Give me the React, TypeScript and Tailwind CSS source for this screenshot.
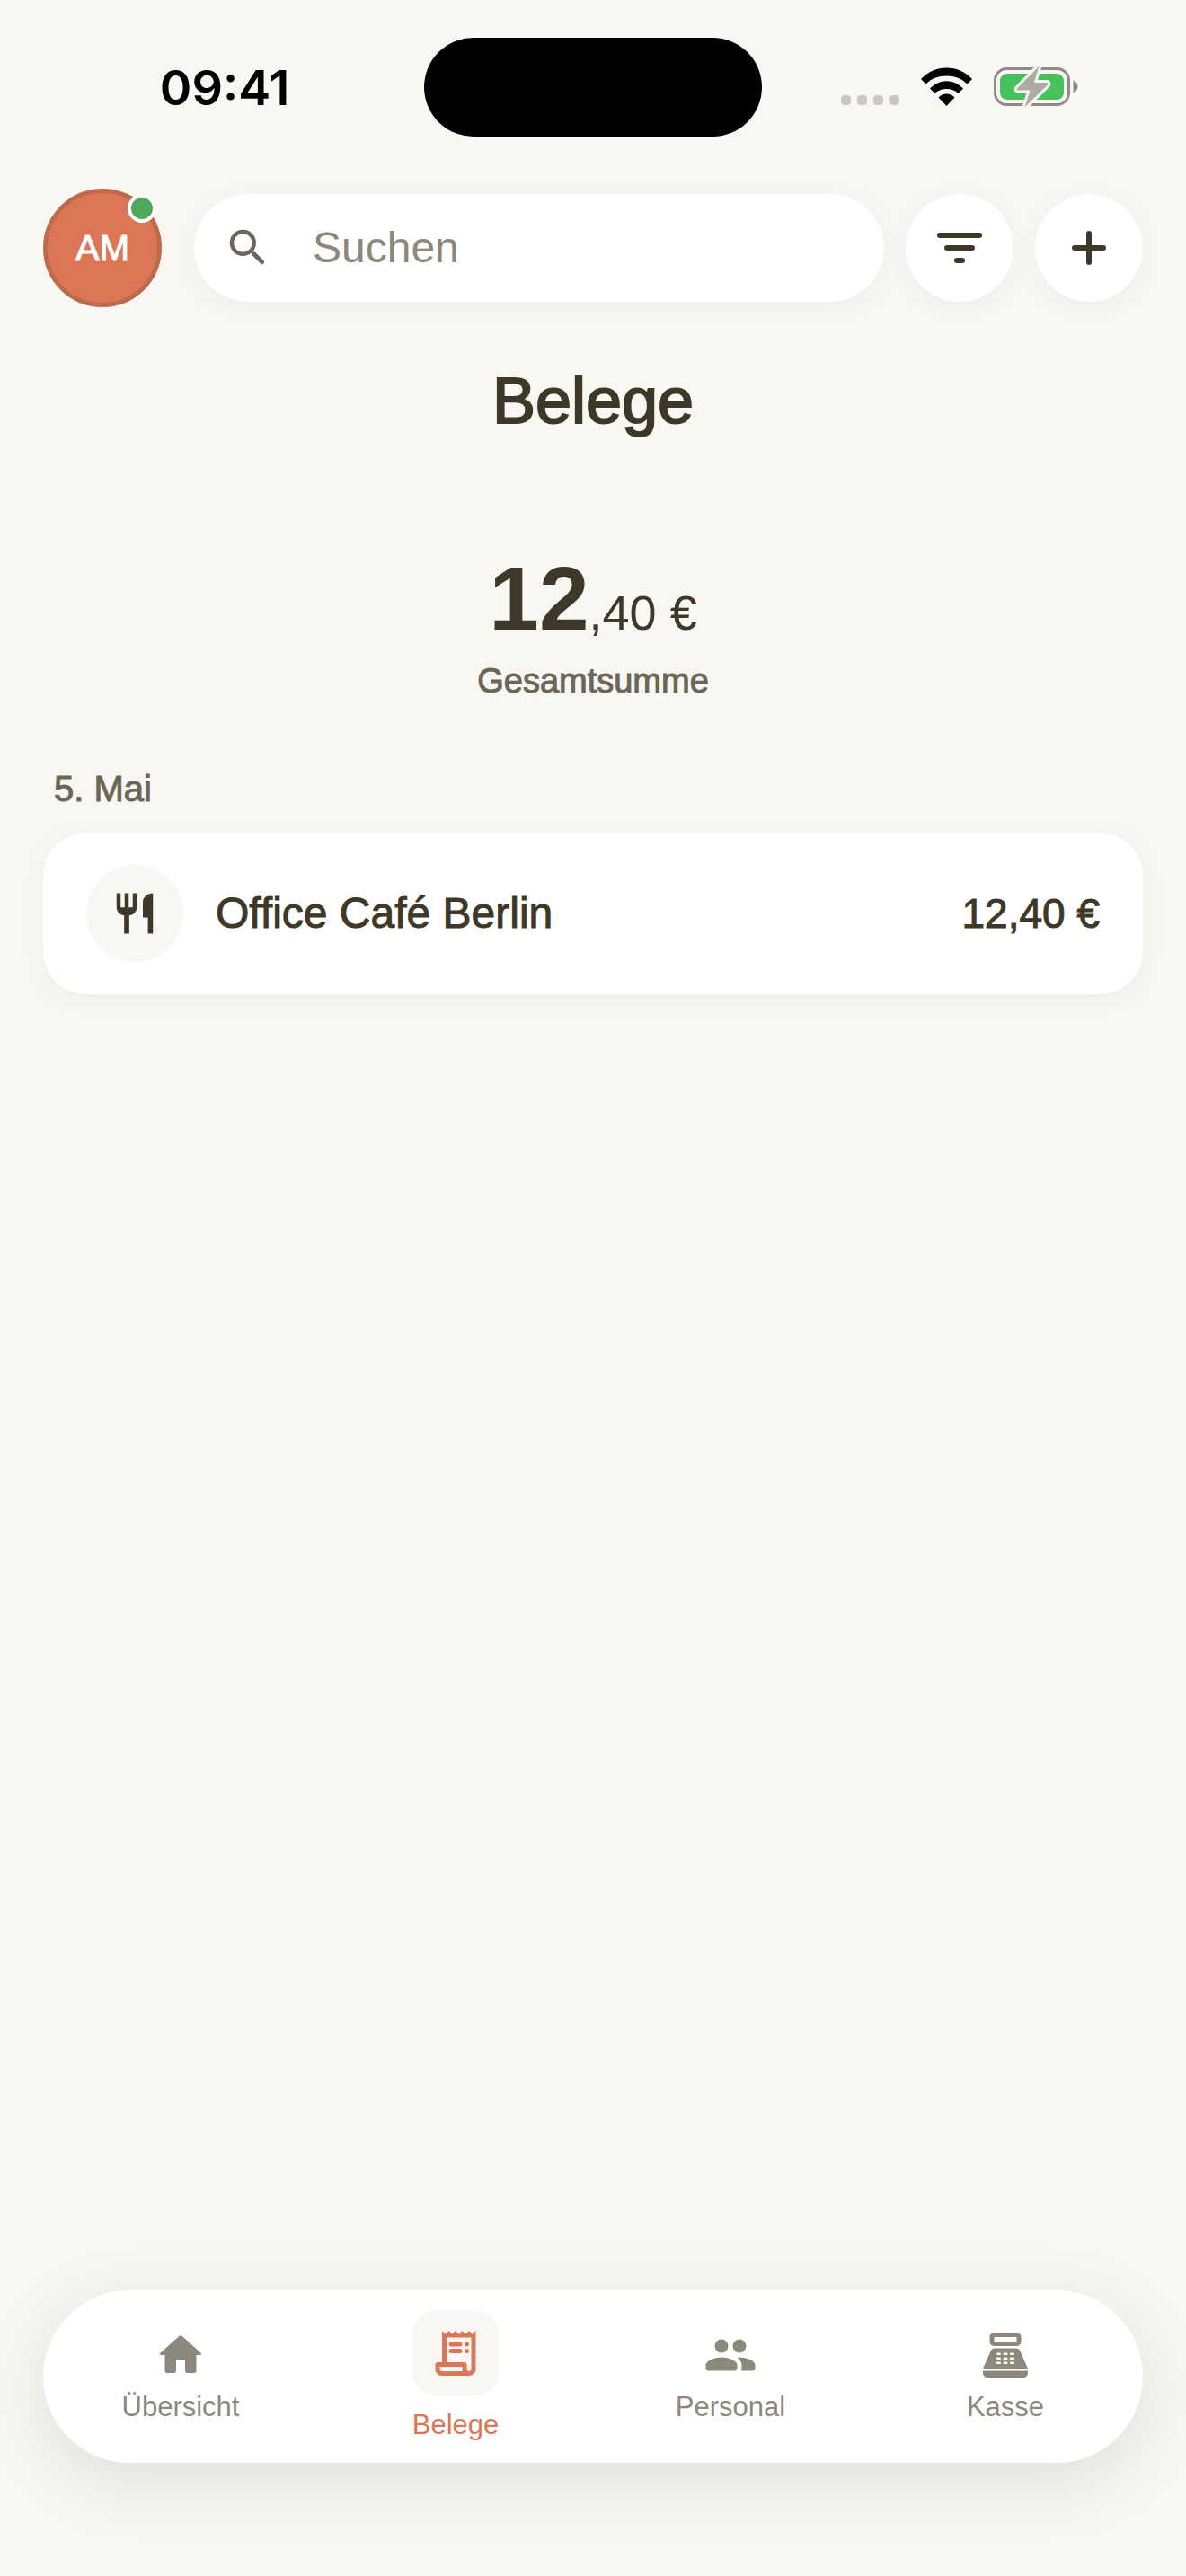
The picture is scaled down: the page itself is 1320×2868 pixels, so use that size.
import type { ReactNode } from "react";
import clsx from "clsx";
import { MdPointOfSale, MdRestaurant } from "react-icons/md";

const SearchIcon = () => (
  <svg viewBox="0 0 24 24" fill="currentColor" className="size-[54px]" aria-hidden="true">
    <path d="M15.5 14h-.79l-.28-.27c1.2-1.4 1.82-3.31 1.48-5.34-.47-2.78-2.79-5-5.59-5.34-4.23-.52-7.79 3.04-7.27 7.27.34 2.8 2.56 5.12 5.34 5.59 2.03.34 3.94-.28 5.34-1.48l.27.28v.79l4.25 4.25c.41.41 1.08.41 1.49 0 .41-.41.41-1.08 0-1.49L15.5 14zm-6 0C7.01 14 5 11.99 5 9.5S7.01 5 9.5 5 14 7.01 14 9.5 11.99 14 9.5 14z" />
  </svg>
);

const FilterIcon = () => (
  <svg viewBox="0 0 60 60" fill="currentColor" className="size-[60px]" aria-hidden="true">
    <rect x="5" y="13" width="50" height="6" rx="3" />
    <rect x="13" y="27" width="34" height="6" rx="3" />
    <rect x="24" y="41" width="12" height="6" rx="3" />
  </svg>
);

const PlusIcon = () => (
  <svg viewBox="0 0 60 60" fill="currentColor" className="size-[60px]" aria-hidden="true">
    <rect x="11" y="27" width="38" height="6" rx="3" />
    <rect x="27" y="11" width="6" height="38" rx="3" />
  </svg>
);

const HomeIcon = () => (
  <svg viewBox="0 0 24 24" fill="currentColor" className="size-[60px]" aria-hidden="true">
    <path d="M10 19v-5h4v5c0 .55.45 1 1 1h3c.55 0 1-.45 1-1v-7h1.7c.46 0 .68-.57.33-.87L12.67 3.6c-.38-.34-.96-.34-1.34 0l-8.36 7.53c-.34.3-.13.87.33.87H5v7c0 .55.45 1 1 1h3c.55 0 1-.45 1-1z" />
  </svg>
);

const ReceiptIcon = () => (
  <svg viewBox="0 0 24 24" fill="currentColor" className="size-[60px]" aria-hidden="true">
    <path
      fillRule="evenodd"
      d="M19.5 3.5 18 2l-1.5 1.5L15 2l-1.5 1.5L12 2l-1.5 1.5L9 2 7.5 3.5 6 2v14H4c-.55 0-1 .45-1 1v2c0 1.66 1.34 3 3 3h12c1.66 0 3-1.34 3-3V2l-1.5 1.5zM15 20H6c-.55 0-1-.45-1-1v-1h10v2zm4-1c0 .55-.45 1-1 1s-1-.45-1-1v-2c0-.55-.45-1-1-1H8V5h11v14z"
    />
    <rect x="9" y="7" width="6" height="2" rx="1" />
    <rect x="9" y="10" width="6" height="2" rx="1" />
    <circle cx="17" cy="8" r="1" />
    <circle cx="17" cy="11" r="1" />
  </svg>
);

const PeopleIcon = () => (
  <svg viewBox="0 0 24 24" fill="currentColor" className="size-[60px]" aria-hidden="true">
    <circle cx="8" cy="8" r="3" />
    <circle cx="16" cy="8" r="3" />
    <path d="M8 13c-2.33 0-7 1.17-7 3.5V18c0 .55.45 1 1 1h12c.55 0 1-.45 1-1v-1.5c0-2.33-4.67-3.5-7-3.5z" />
    <path d="M16 13c-.29 0-.62.02-.97.05.02.01.03.03.04.04 1.14.83 1.93 1.94 1.93 3.41V18c0 .35-.07.69-.18 1H22c.55 0 1-.45 1-1v-1.5c0-2.33-4.67-3.5-7-3.5z" />
  </svg>
);

const StatusBar = () => (
  <div className="grid h-[194px] grid-cols-[1fr_376px_1fr] items-center">
    <div className="pl-7 text-center font-['Inter'] text-[54px] font-semibold text-black">09:41</div>
    <div className="h-[110px] rounded-full bg-black" />
    <div className="flex items-center justify-center gap-6 pr-8">
      <svg viewBox="0 0 65 44" className="h-11 w-[65px]" fill="#cfc6c0" aria-hidden="true">
        <rect x="0" y="31" width="11" height="11" rx="4" />
        <rect x="18" y="31" width="11" height="11" rx="4" />
        <rect x="36" y="31" width="11" height="11" rx="4" />
        <rect x="54" y="31" width="11" height="11" rx="4" />
      </svg>
      <svg viewBox="0 0 57 44" className="h-11 w-[57px]" aria-hidden="true">
        <path d="M0 13C7.500 5 17.500 0.500 28.500 0.500S49.500 5 57 13L51.500 18.500C45.500 12.500 37.500 9.500 28.500 9.500S11.500 12.500 5.500 18.500Z" />
        <path d="M10 23.500C15 18.500 21.500 15.200 28.500 15.200S42 18.500 47 23.500L41.500 29C38 25.500 33.500 24 28.500 24S19 25.500 15.500 29Z" />
        <path d="M19.500 33.500C22 31 25 29.500 28.500 29.500S35 31 37.500 33.500L28.500 43Z" />
      </svg>
      <svg viewBox="0 0 94 50" className="h-[50px] w-[94px]" aria-hidden="true">
        <rect x="1.500" y="4.500" width="82" height="40" rx="13" fill="none" stroke="#8f8c83" strokeWidth="3" />
        <path d="M88.500 17.500c3 1 5 3.700 5 6.800s-2 6-5 7z" fill="#8f8c83" />
        <rect x="7" y="10" width="71" height="29" rx="8" fill="#45c25a" />
        <path
          d="M50.500 1.500 26 26.500Q25 28.500 27.500 28.500H40.500L34.500 47.500 60 22.500Q61.500 20 58.500 20H45Z"
          fill="#aeaba2"
          stroke="#f8f7f3"
          strokeWidth="6"
          strokeLinejoin="round"
          paintOrder="stroke"
        />
      </svg>
    </div>
  </div>
);

const RoundButton = ({ label, children }: { label: string; children: ReactNode }) => (
  <button
    type="button"
    aria-label={label}
    className="flex size-[120px] shrink-0 items-center justify-center rounded-full bg-white shadow-[0_6px_24px_rgba(60,64,48,0.05)]"
  >
    {children}
  </button>
);

const Header = () => (
  <header className="mt-4 flex items-center gap-6 px-12">
    <button type="button" aria-label="Profil AM" className="relative mr-3 size-[132px] shrink-0">
      <span className="flex size-full items-center justify-center rounded-full border-5 border-[#be6b4c] bg-[#db7757] text-[40px] text-white [-webkit-text-stroke:1px]">
        AM
      </span>
      <span className="absolute top-1.5 right-1.5 size-8 rounded-full border-4 border-white bg-[#4fa95c]" />
    </button>
    <label className="flex h-[120px] min-w-0 flex-1 items-center rounded-full bg-white shadow-[0_6px_24px_rgba(60,64,48,0.05)]">
      <span className="flex w-[120px] shrink-0 justify-center text-[#6b6656]">
        <SearchIcon />
      </span>
      <input
        type="search"
        aria-label="Suchen"
        placeholder="Suchen"
        className="min-w-0 flex-1 px-3 text-[48px] outline-none placeholder:text-[#8c887b]"
      />
    </label>
    <RoundButton label="Filter">
      <FilterIcon />
    </RoundButton>
    <RoundButton label="Beleg hinzufügen">
      <PlusIcon />
    </RoundButton>
  </header>
);

const tabs = [
  { label: "Übersicht", icon: <HomeIcon /> },
  { label: "Belege", icon: <ReceiptIcon />, active: true },
  { label: "Personal", icon: <PeopleIcon /> },
  { label: "Kasse", icon: <MdPointOfSale className="size-[60px]" /> },
];

const TabBar = () => (
  <nav className="mx-12 mt-auto mb-[126px] grid h-48 grid-cols-4 rounded-full bg-white shadow-[0_18px_72px_rgba(60,60,48,0.13)]">
    {tabs.map((tab) => (
      <a
        key={tab.label}
        href="#"
        aria-current={tab.active ? "page" : undefined}
        className={clsx(
          "flex flex-col items-center justify-center text-[31px] leading-10",
          tab.active ? "gap-3 text-[#db7757]" : "gap-2 text-[#8c887b]"
        )}
      >
        {tab.active ? (
          <span className="flex size-24 items-center justify-center rounded-[28px] bg-[#f8f7f3]">{tab.icon}</span>
        ) : (
          tab.icon
        )}
        <span>{tab.label}</span>
      </a>
    ))}
  </nav>
);

const App = () => {
  return (
    <div className="flex min-h-screen flex-col bg-[#f8f7f3] font-['Liberation_Sans',sans-serif] text-[#3d3828]">
      <StatusBar />
      <Header />

      <main className="flex flex-col px-12">
        <h1 className="mt-16 text-center text-[72px] leading-20 [-webkit-text-stroke:2px]">Belege</h1>

        {/* Total */}
        <p className="mt-[124px] text-center text-[100px] leading-28 font-bold">
          12<span className="text-[54px] leading-none font-normal">,40 €</span>
        </p>
        <p className="mt-3 text-center text-[38px] leading-12 text-[#6b6656] [-webkit-text-stroke:1px]">
          Gesamtsumme
        </p>

        {/* Receipts grouped by day */}
        <section>
          <h2 className="mt-18 mb-[25px] px-3 text-[40px] leading-12 text-[#6b6656] [-webkit-text-stroke:1px]">
            5. Mai
          </h2>
          <button
            type="button"
            className="flex w-full items-center gap-9 rounded-[48px] bg-white px-12 py-9 text-[48px] shadow-[0_6px_24px_rgba(60,64,48,0.05)] [-webkit-text-stroke:1px]"
          >
            <span className="flex size-[108px] shrink-0 items-center justify-center rounded-full bg-[#f8f7f3]">
              <MdRestaurant className="size-[54px]" />
            </span>
            <span className="flex-1 text-left">Office Café Berlin</span>
            <span className="text-[46px]">12,40 €</span>
          </button>
        </section>
      </main>

      <TabBar />
    </div>
  );
};

export default App;
